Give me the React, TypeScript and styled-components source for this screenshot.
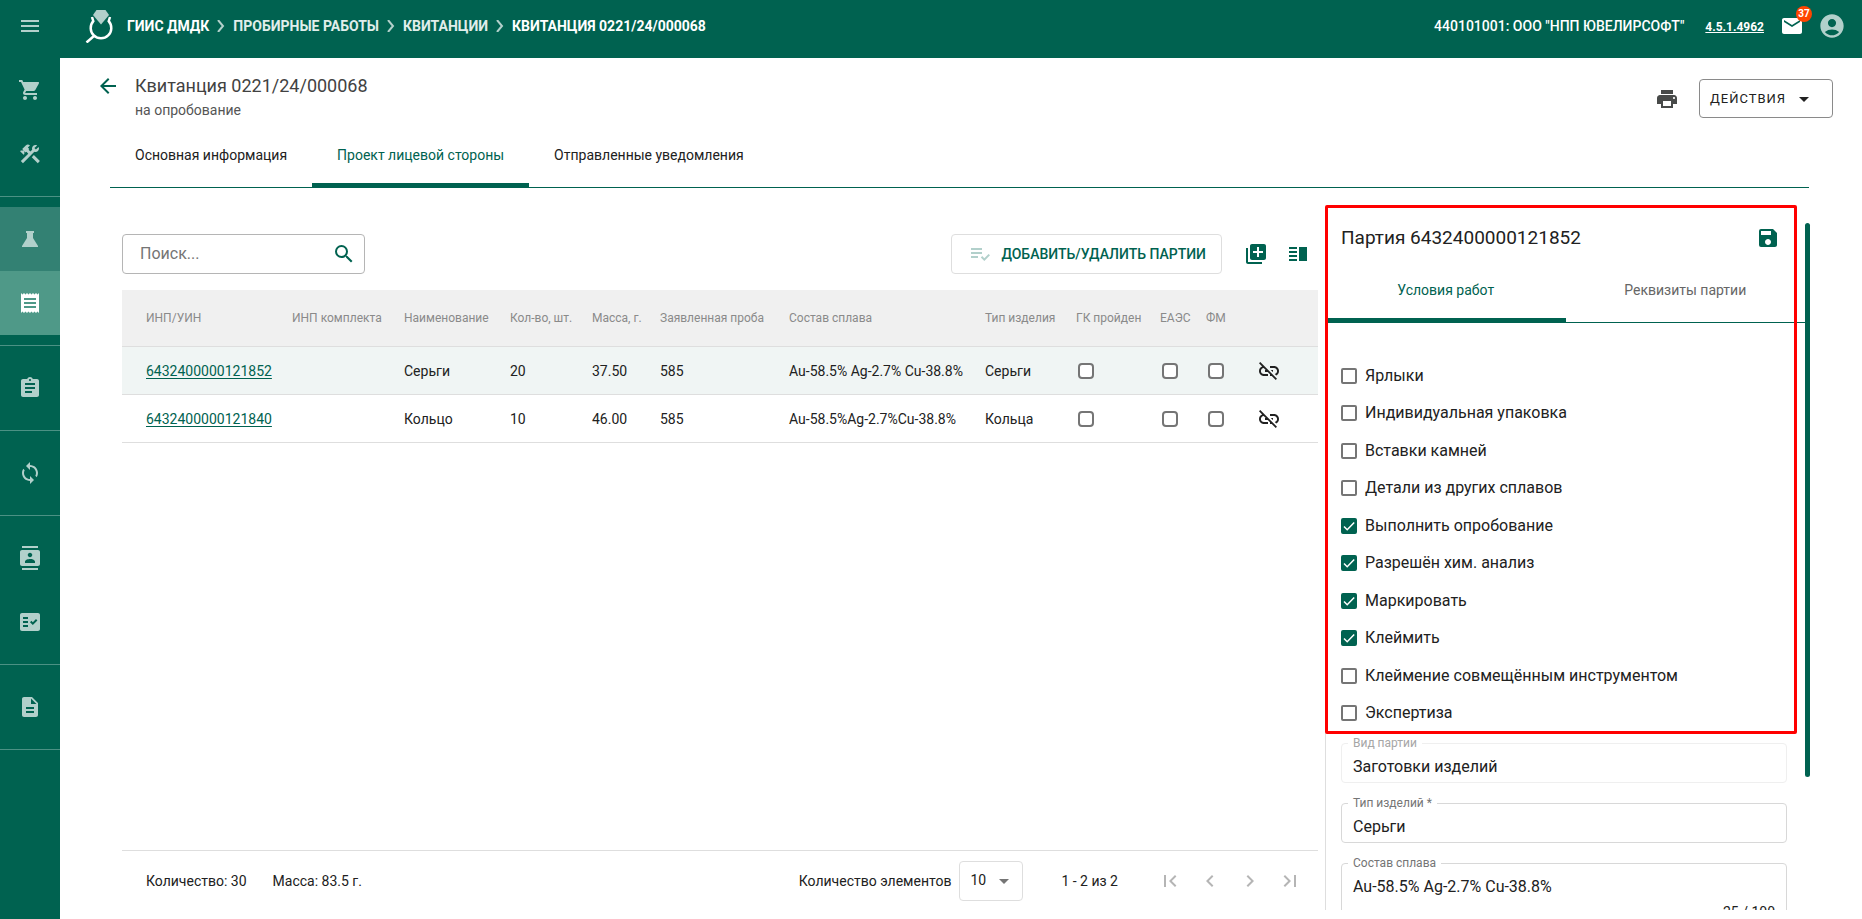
import React, { useState } from 'react';
import styled, { createGlobalStyle } from 'styled-components';
import {
  MdMenu, MdShoppingCart, MdConstruction, MdReceipt, MdAssignment, MdSync, MdContacts, MdFactCheck,
  MdDescription, MdMail, MdAccountCircle, MdArrowBack, MdPrint, MdArrowDropDown, MdSearch,
  MdPlaylistAddCheck, MdLibraryAdd, MdVerticalSplit, MdLinkOff, MdSave, MdFirstPage, MdLastPage,
  MdChevronLeft, MdChevronRight,
} from 'react-icons/md';

const green = '#006250';

const GlobalStyle = createGlobalStyle`
  *, *::before, *::after { box-sizing: border-box; }
  body {
    margin: 0;
    font-family: Roboto, "Liberation Sans", sans-serif;
    font-size: 14px;
    line-height: 20px;
    color: #212121;
    background: #fff;
  }
  button, input, select, textarea { font: inherit; color: inherit; }
  h1, h2, p { margin: 0; font-weight: 400; }
  a { color: inherit; }
`;

const Shell = styled.div`
  display: grid;
  grid-template-columns: 60px minmax(0, 1fr);
  grid-template-rows: 58px minmax(0, 1fr);
  height: 100vh;
`;

const PlainButton = styled.button`
  display: inline-flex;
  align-items: center;
  justify-content: center;
  padding: 0;
  border: 0;
  background: none;
  cursor: pointer;
`;

const TopBar = styled.header`
  grid-column: 1 / -1;
  display: flex;
  align-items: center;
  padding: 0 16px 6px 0;
  background: ${green};
  color: #fff;
`;

const MenuButton = styled(PlainButton)`
  width: 60px;
  height: 40px;
  color: #b2d0cb;
  font-size: 24px;
`;

const Logo = styled.svg`
  width: 28px;
  height: 34px;
  margin: 0 14px 0 25px;
`;

const Crumbs = styled.nav`
  display: flex;
  align-items: center;
  font-weight: 700;
  white-space: nowrap;
`;

const Crumb = styled.a<{ $dim?: boolean }>`
  color: ${p => (p.$dim ? '#e0eeeb' : '#fff')};
  text-decoration: none;
`;

const CrumbArrow = styled.svg`
  width: 8px;
  height: 12px;
  margin: 0 8px;
`;

const Account = styled.div`
  display: flex;
  align-items: center;
  margin-left: auto;
  font-weight: 500;
  white-space: nowrap;
`;

const Version = styled.a`
  margin: 2px 0 0 21px;
  font-size: 12px;
  font-weight: 700;
`;

const MailButton = styled(PlainButton)`
  position: relative;
  margin-left: 16px;
  color: #fff;
  font-size: 24px;
`;

const Badge = styled.span`
  position: absolute;
  top: -8px;
  right: -8px;
  width: 16px;
  height: 16px;
  border-radius: 8px;
  background: #ff4500;
  font-size: 10px;
  font-weight: 700;
  line-height: 16px;
  text-align: center;
`;

const UserButton = styled(PlainButton)`
  margin-left: 14px;
  color: #b2d0cb;
  font-size: 28px;
`;

const Sidebar = styled.nav`
  background: ${green};
`;

const SideGroup = styled.div`
  margin-bottom: 10px;
  padding-bottom: 10px;
  border-bottom: 1px solid #4c9184;
`;

const SideLink = styled.a<{ $tone?: 'section' | 'current' }>`
  display: flex;
  align-items: center;
  justify-content: center;
  height: 64px;
  color: ${p => (p.$tone === 'current' ? '#fff' : '#b2d0cb')};
  background: ${p => (p.$tone === 'current' ? '#4f9988' : p.$tone === 'section' ? '#338173' : 'transparent')};
  font-size: 24px;
`;

const Main = styled.main`
  display: flex;
  flex-direction: column;
  min-width: 0;
  padding: 14px 29px 9px 34px;
`;

const PageHead = styled.div`
  display: flex;
  align-items: flex-start;
`;

const BackButton = styled(PlainButton)`
  width: 28px;
  height: 28px;
  margin-right: 13px;
  color: ${green};
  font-size: 24px;
`;

const PageTitle = styled.h1`
  font-size: 18px;
  line-height: 28px;
  color: #424242;
`;

const PageNote = styled.p`
  color: #555;
`;

const HeadActions = styled.div`
  display: flex;
  align-items: center;
  gap: 20px;
  margin: 7px 0 0 auto;
`;

const PrintButton = styled(PlainButton)`
  color: #484a49;
  font-size: 24px;
`;

const ActionsButton = styled(PlainButton)`
  width: 134px;
  height: 39px;
  justify-content: flex-start;
  padding-left: 10px;
  border: 1px solid #8a8a8a;
  border-radius: 4px;
  font-size: 13px;
  letter-spacing: 1px;

  svg { margin-left: 6px; font-size: 24px; }
`;

const Tabs = styled.div`
  display: flex;
  margin: 6px 24px 0 16px;
  border-bottom: 1px solid ${green};
`;

const Tab = styled.button<{ $active?: boolean }>`
  height: 61px;
  padding: 0 25px;
  border: 0;
  border-bottom: 4px solid ${p => (p.$active ? green : 'transparent')};
  background: none;
  color: ${p => (p.$active ? green : '#212121')};
  cursor: pointer;
`;

const Workspace = styled.div`
  flex: 1;
  display: grid;
  grid-template-columns: minmax(0, 1fr) 485px;
  gap: 7px;
  min-height: 0;
  margin: 0 23px 0 28px;
`;

const Batches = styled.section`
  display: flex;
  flex-direction: column;
  min-width: 0;
  padding-top: 46px;
`;

const Toolbar = styled.div`
  display: flex;
  align-items: center;
  margin-bottom: 16px;
  padding-right: 8px;
`;

const SearchBox = styled.label`
  display: flex;
  align-items: center;
  width: 243px;
  height: 40px;
  padding: 0 8px 0 17px;
  border: 1px solid #b5b5b5;
  border-radius: 4px;
  color: ${green};
  font-size: 24px;

  input {
    flex: 1;
    min-width: 0;
    padding: 0;
    border: 0;
    outline: 0;
    background: none;
    color: #212121;
    font-size: 16px;
  }
  input::placeholder { color: #757575; opacity: 1; }
`;

const EditButton = styled(PlainButton)`
  height: 40px;
  margin-left: auto;
  padding: 0 15px 0 16px;
  border: 1px solid #dedede;
  border-radius: 4px;
  color: ${green};
  font-weight: 500;

  svg { margin-right: 9px; color: #b2d0cb; font-size: 24px; }
`;

const ToolButton = styled(PlainButton)`
  margin-left: 22px;
  color: ${green};
  font-size: 24px;

  & + & { margin-left: 18px; }
`;

const BatchTable = styled.table`
  width: 100%;
  border-collapse: separate;
  border-spacing: 0;
  table-layout: fixed;
  white-space: nowrap;

  th, td {
    padding: 0 0 0 12px;
    border-bottom: 1px solid #dedede;
    text-align: left;
  }
  th:first-child, td:first-child { padding-left: 24px; }
  th {
    height: 57px;
    background: #f0f0f0;
    color: #8a8a8a;
    font-size: 12px;
    font-weight: 400;
  }
  td { height: 48px; }
  input { display: block; margin-left: 2px; }
`;

const Row = styled.tr<{ $current?: boolean }>`
  background: ${p => (p.$current ? '#f0f5f4' : '#fff')};
`;

const BatchLink = styled.a`
  color: ${green};
  text-underline-offset: 2px;
`;

const UnlinkButton = styled(PlainButton)`
  display: flex;
  width: 24px;
  margin-left: 5px;
  font-size: 24px;
`;

const TickBox = styled.input.attrs({ type: 'checkbox' })<{ $round?: boolean }>`
  appearance: none;
  flex: none;
  width: 16px;
  height: 16px;
  margin: 0;
  border: 2px solid #757575;
  border-radius: ${p => (p.$round ? 4 : 2)}px;
  background: #fff center / 16px 16px no-repeat;

  &:checked {
    border-color: ${green};
    background-color: ${green};
    background-image: url("data:image/svg+xml,%3Csvg xmlns='http://www.w3.org/2000/svg' viewBox='0 0 16 16'%3E%3Cpath d='M3 8.5l3.2 3.2L13.2 4.5' fill='none' stroke='white' stroke-width='1.5'/%3E%3C/svg%3E");
  }
`;

const TableFooter = styled.footer`
  display: flex;
  align-items: center;
  height: 60px;
  margin-top: auto;
  padding: 0 16px 0 24px;
  border-top: 1px solid #dedede;
  white-space: nowrap;
`;

const Totals = styled.div`
  display: flex;
  gap: 26px;
  margin-right: auto;
`;

const PageSize = styled.label`
  display: flex;
  align-items: center;
  gap: 8px;
`;

const SelectBox = styled.span`
  display: grid;
  grid-template-columns: 64px;
  align-items: center;

  select, svg { grid-area: 1 / 1; }
  select {
    appearance: none;
    height: 40px;
    padding: 0 10px 2px;
    border: 1px solid #dedede;
    border-radius: 4px;
    background: #fff;
  }
  svg { justify-self: end; margin-right: 7px; color: #757575; font-size: 24px; pointer-events: none; }
`;

const Range = styled.span`
  margin: 0 40px 0 38px;
`;

const Pager = styled.div`
  display: flex;
  gap: 16px;

  button { color: #b5b5b5; font-size: 24px; }
`;

const PanelArea = styled.aside`
  position: relative;
  display: grid;
  grid-template-columns: minmax(0, 1fr) 5px;
  min-height: 0;
  padding-top: 30px;
`;

const Panel = styled.div`
  overflow: hidden;
  border-left: 1px solid #dedede;
`;

const ScrollThumb = styled.div`
  height: 80%;
  margin-top: 5px;
  border-radius: 3px;
  background: ${green};
`;

const PanelHead = styled.div`
  display: flex;
  align-items: center;
  justify-content: space-between;
  height: 40px;
  padding: 0 25px 0 15px;

  button { color: ${green}; font-size: 24px; }
`;

const PanelTitle = styled.h2`
  font-size: 19px;
  line-height: 28px;
`;

const PanelTabs = styled.div`
  display: grid;
  grid-template-columns: 1fr 1fr;
  border-bottom: 1px solid ${green};
`;

const PanelTab = styled(Tab)`
  height: 64px;
  padding-top: 4px;
  color: ${p => (p.$active ? green : '#666')};
`;

const Options = styled.div`
  display: grid;
  grid-template-rows: repeat(10, 1fr);
  height: 375px;
  margin-top: 34px;
  padding-left: 15px;
`;

const Option = styled.label`
  display: flex;
  align-items: center;
  gap: 8px;
  font-size: 16px;
`;

const Fields = styled.div`
  display: grid;
  gap: 20px;
  padding: 11px 18px 0 15px;
`;

const Field = styled.div<{ $faded?: boolean }>`
  position: relative;
  border: 1px solid ${p => (p.$faded ? '#efefef' : '#d8d8d8')};
  border-radius: 4px;

  label {
    position: absolute;
    top: -9px;
    left: 6px;
    padding: 0 5px;
    background: #fff;
    color: ${p => (p.$faded ? '#a6a6a6' : '#757575')};
    font-size: 12px;
    line-height: 16px;
  }
  input, textarea {
    display: block;
    width: 100%;
    padding: 6px 11px 0;
    border: 0;
    outline: 0;
    resize: none;
    background: none;
    font-size: 16px;
  }
  input { height: 38px; }
  textarea { height: 36px; padding-top: 12px; line-height: 22px; overflow: hidden; }
`;

const Counter = styled.p`
  padding: 2px 11px 8px;
  text-align: right;
`;

const Highlight = styled.div`
  position: absolute;
  top: 17px;
  left: 0;
  right: 13px;
  height: 529px;
  border: 3px solid #f00;
  border-radius: 2px;
  pointer-events: none;
`;

const FlaskIcon = () => (
  <svg width="20" height="20" viewBox="0 0 20 20" fill="currentColor" aria-hidden="true">
    <path d="M6 2h8v2h-1v5l5 8v1H2v-1l5-8V4H6z" />
  </svg>
);

const sideGroups: { label: string; icon: React.ReactNode; tone?: 'section' | 'current' }[][] = [
  [{ label: 'Корзина', icon: <MdShoppingCart /> }, { label: 'Инструменты', icon: <MdConstruction /> }],
  [
    { label: 'Пробирные работы', icon: <FlaskIcon />, tone: 'section' },
    { label: 'Квитанции', icon: <MdReceipt />, tone: 'current' },
  ],
  [{ label: 'Задания', icon: <MdAssignment /> }],
  [{ label: 'Обмен', icon: <MdSync /> }],
  [{ label: 'Контакты', icon: <MdContacts /> }, { label: 'Проверки', icon: <MdFactCheck /> }],
  [{ label: 'Документы', icon: <MdDescription /> }],
];

const columns: [string, number?][] = [
  ['ИНП/УИН', 158], ['ИНП комплекта', 112], ['Наименование', 106], ['Кол-во, шт.', 82], ['Масса, г.', 68],
  ['Заявленная проба', 129], ['Состав сплава', 196], ['Тип изделия', 91], ['ГК пройден', 84], ['ЕАЭС', 46],
  ['ФМ', 46], [''],
];

const rows = [
  { id: '6432400000121852', name: 'Серьги', qty: '20', mass: '37.50', alloy: 'Au-58.5% Ag-2.7% Cu-38.8%', kind: 'Серьги' },
  { id: '6432400000121840', name: 'Кольцо', qty: '10', mass: '46.00', alloy: 'Au-58.5%Ag-2.7%Cu-38.8%', kind: 'Кольца' },
];

const options: [string, boolean][] = [
  ['Ярлыки', false], ['Индивидуальная упаковка', false], ['Вставки камней', false],
  ['Детали из других сплавов', false], ['Выполнить опробование', true], ['Разрешён хим. анализ', true],
  ['Маркировать', true], ['Клеймить', true], ['Клеймение совмещённым инструментом', false], ['Экспертиза', false],
];

const Arrow = () => (
  <CrumbArrow viewBox="0 0 8 12" fill="none" stroke="#b2d0cb" strokeWidth="2" aria-hidden="true">
    <path d="M1 0l5 6-5 6" />
  </CrumbArrow>
);

export default function App() {
  const [pageTab, setPageTab] = useState(1);
  const [panelTab, setPanelTab] = useState(0);

  return (
    <>
      <GlobalStyle />
      <Shell>
        <TopBar>
          <MenuButton aria-label="Меню"><MdMenu /></MenuButton>
          <Logo viewBox="0 0 28 34" aria-hidden="true">
            <path d="M7 8l1.300 4.200a10.300 10.300 0 1 0 15.400 0L25 8" fill="none" stroke="#fff" strokeWidth="2.500" />
            <path d="M9.500 26.500l-8 7" stroke="#fff" strokeWidth="2.500" />
            <path d="M11.500 1h9l3.500 5-8 9.500L8 6z" fill="#b2d0cb" />
          </Logo>
          <Crumbs>
            <Crumb href="#">ГИИС ДМДК</Crumb><Arrow />
            <Crumb href="#" $dim>ПРОБИРНЫЕ РАБОТЫ</Crumb><Arrow />
            <Crumb href="#" $dim>КВИТАНЦИИ</Crumb><Arrow />
            <Crumb href="#">КВИТАНЦИЯ 0221/24/000068</Crumb>
          </Crumbs>
          <Account>
            <span>440101001: ООО "НПП ЮВЕЛИРСОФТ"</span>
            <Version href="#">4.5.1.4962</Version>
            <MailButton aria-label="Сообщения"><MdMail /><Badge>37</Badge></MailButton>
            <UserButton aria-label="Профиль"><MdAccountCircle /></UserButton>
          </Account>
        </TopBar>

        <Sidebar>
          {sideGroups.map((group, i) => (
            <SideGroup key={i}>
              {group.map(item => (
                <SideLink key={item.label} href="#" aria-label={item.label} $tone={item.tone}>{item.icon}</SideLink>
              ))}
            </SideGroup>
          ))}
        </Sidebar>

        <Main>
          <PageHead>
            <BackButton aria-label="Назад"><MdArrowBack /></BackButton>
            <div>
              <PageTitle>Квитанция 0221/24/000068</PageTitle>
              <PageNote>на опробование</PageNote>
            </div>
            <HeadActions>
              <PrintButton aria-label="Печать"><MdPrint /></PrintButton>
              <ActionsButton>ДЕЙСТВИЯ<MdArrowDropDown /></ActionsButton>
            </HeadActions>
          </PageHead>

          <Tabs role="tablist">
            {['Основная информация', 'Проект лицевой стороны', 'Отправленные уведомления'].map((t, i) => (
              <Tab key={t} role="tab" aria-selected={pageTab === i} $active={pageTab === i} onClick={() => setPageTab(i)}>{t}</Tab>
            ))}
          </Tabs>

          <Workspace>
            <Batches>
              <Toolbar>
                <SearchBox>
                  <input aria-label="Поиск" placeholder="Поиск..." />
                  <MdSearch />
                </SearchBox>
                <EditButton><MdPlaylistAddCheck />ДОБАВИТЬ/УДАЛИТЬ ПАРТИИ</EditButton>
                <ToolButton aria-label="Добавить"><MdLibraryAdd /></ToolButton>
                <ToolButton aria-label="Вид"><MdVerticalSplit /></ToolButton>
              </Toolbar>
              <BatchTable>
                <colgroup>{columns.map(([c, w]) => <col key={c} width={w} />)}</colgroup>
                <thead>
                  <tr>{columns.map(([c]) => <th key={c} scope="col">{c}</th>)}</tr>
                </thead>
                <tbody>
                  {rows.map((r, i) => (
                    <Row key={r.id} $current={i === 0}>
                      <td><BatchLink href="#">{r.id}</BatchLink></td>
                      <td />
                      <td>{r.name}</td>
                      <td>{r.qty}</td>
                      <td>{r.mass}</td>
                      <td>585</td>
                      <td>{r.alloy}</td>
                      <td>{r.kind}</td>
                      <td><TickBox $round aria-label="ГК пройден" /></td>
                      <td><TickBox $round aria-label="ЕАЭС" /></td>
                      <td><TickBox $round aria-label="ФМ" /></td>
                      <td><UnlinkButton aria-label="Отвязать"><MdLinkOff /></UnlinkButton></td>
                    </Row>
                  ))}
                </tbody>
              </BatchTable>
              <TableFooter>
                <Totals><span>Количество: 30</span><span>Масса: 83.5 г.</span></Totals>
                <PageSize>
                  Количество элементов
                  <SelectBox>
                    <select defaultValue="10"><option>10</option><option>20</option><option>50</option></select>
                    <MdArrowDropDown />
                  </SelectBox>
                </PageSize>
                <Range>1 - 2 из 2</Range>
                <Pager>
                  <PlainButton aria-label="Первая"><MdFirstPage /></PlainButton>
                  <PlainButton aria-label="Предыдущая"><MdChevronLeft /></PlainButton>
                  <PlainButton aria-label="Следующая"><MdChevronRight /></PlainButton>
                  <PlainButton aria-label="Последняя"><MdLastPage /></PlainButton>
                </Pager>
              </TableFooter>
            </Batches>

            <PanelArea>
              <Panel>
                <PanelHead>
                  <PanelTitle>Партия 6432400000121852</PanelTitle>
                  <PlainButton aria-label="Сохранить"><MdSave /></PlainButton>
                </PanelHead>
                <PanelTabs role="tablist">
                  {['Условия работ', 'Реквизиты партии'].map((t, i) => (
                    <PanelTab key={t} role="tab" aria-selected={panelTab === i} $active={panelTab === i} onClick={() => setPanelTab(i)}>{t}</PanelTab>
                  ))}
                </PanelTabs>
                <Options>
                  {options.map(([label, on]) => (
                    <Option key={label}><TickBox defaultChecked={on} />{label}</Option>
                  ))}
                </Options>
                <Fields>
                  <Field $faded>
                    <input id="kind" defaultValue="Заготовки изделий" />
                    <label htmlFor="kind">Вид партии</label>
                  </Field>
                  <Field>
                    <input id="type" defaultValue="Серьги" />
                    <label htmlFor="type">Тип изделий *</label>
                  </Field>
                  <Field>
                    <textarea id="alloy" rows={1} defaultValue="Au-58.5% Ag-2.7% Cu-38.8%" />
                    <label htmlFor="alloy">Состав сплава</label>
                    <Counter>25 / 100</Counter>
                  </Field>
                </Fields>
              </Panel>
              <ScrollThumb />
              <Highlight />
            </PanelArea>
          </Workspace>
        </Main>
      </Shell>
    </>
  );
}
